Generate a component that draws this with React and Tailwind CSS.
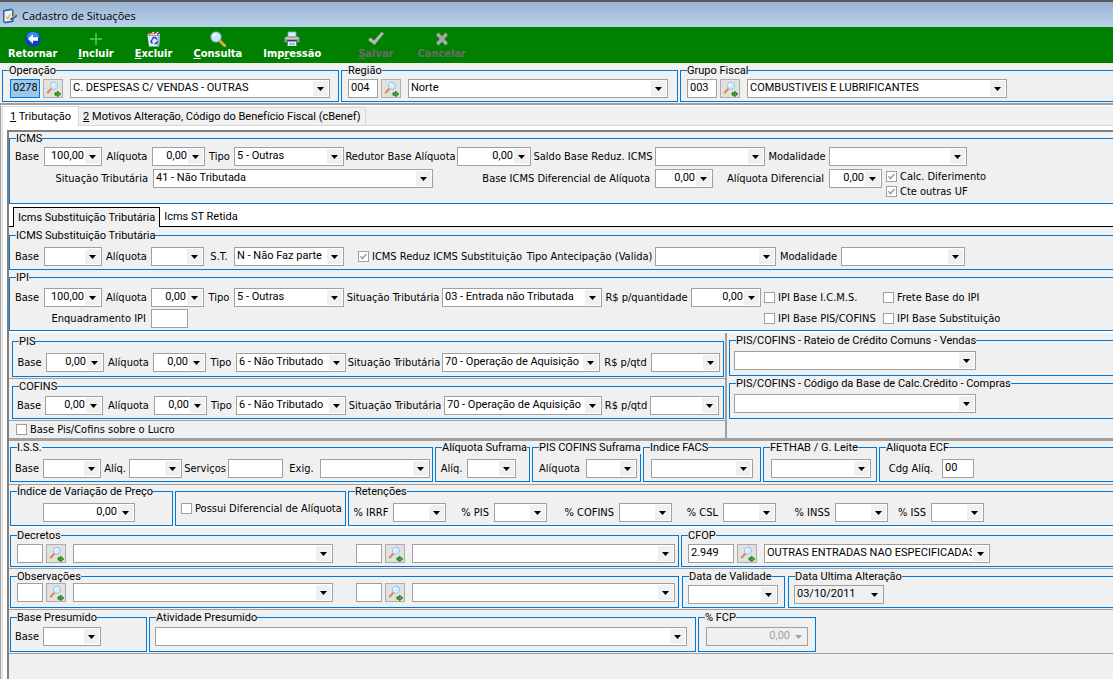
import { useId } from 'react';
import clsx from 'clsx';

const UI_FONT = "font-['DejaVu_Sans_Condensed','DejaVu_Sans',sans-serif]";
const DATA_FONT = "font-['Roboto',Arial,sans-serif]";

/* ---------- Ícones ---------- */

function AppIcon() {
  return (
    <svg width="16" height="16" viewBox="0 0 16 16" aria-hidden="true">
      <path d="M1 2 9.500 .5l2 1.500v12L3 15.500 1 14z" fill="#2f66a8" />
      <path d="M2.500 3.500 10 2.200v10.300L2.500 13.800z" fill="#eef5fc" />
      <path d="M4 8.500 5.800 10.500 8.500 6" fill="none" stroke="#e8b23c" strokeWidth="1.400" />
      <path d="M7.500 11.200 13.500 6l2 2L9.500 12z" fill="#31507a" />
      <path d="M9.500 9.800 14.500 6.200" stroke="#e0a860" strokeWidth="1.200" />
    </svg>
  );
}

function BackIcon() {
  return (
    <svg width="16" height="16" viewBox="0 0 16 16" aria-hidden="true">
      <circle cx="8" cy="8" r="7.800" fill="#0b3fc5" />
      <path d="M1.500 6.500a6.600 6.600 0 0 1 13 0c-3 1.500-10 1.500-13 0z" fill="#3f86ee" />
      <path d="M2.800 8 8 3.200v3.100h5v3.400H8v3.100z" fill="#fff" />
    </svg>
  );
}

function PlusIcon() {
  return (
    <svg width="16" height="16" viewBox="0 0 16 16" aria-hidden="true">
      <path d="M8 2v12M2 8h12" stroke="#4fd038" strokeWidth="1.600" />
    </svg>
  );
}

function TrashIcon() {
  return (
    <svg width="16" height="16" viewBox="0 0 16 16" aria-hidden="true">
      <path d="M1.500 4h12.500l-1 11.500H3z" fill="#e6e9f6" />
      <path d="M14 4l-1 11.500h-2L12 4z" fill="#a9b1d6" />
      <path d="M1 4.500 3 1.500l2 1.500 2-2.500 2.500 2L12 .5l2.500 4z" fill="#f4f4f4" />
      <path d="M2.500 3.500 4.500 1.800M8 3l1.500-2" stroke="#e02020" strokeWidth="1.400" />
      <path d="M5.500 3.500 7 2" stroke="#e8a020" strokeWidth="1.500" />
      <path d="M11 3.500 13 2" stroke="#283a9c" strokeWidth="1.500" />
      <path d="M6 8.500 7.500 6.500h2L11 8.500M11.500 10l-1 2.500h-2M6.500 12.500 5 10.500 6 9" fill="none" stroke="#1747c8" strokeWidth="1.500" />
      <path d="M1.500 4.500h12.500" stroke="#8088b8" strokeWidth=".8" />
    </svg>
  );
}

function SearchIcon() {
  return (
    <svg width="16" height="16" viewBox="0 0 16 16" aria-hidden="true">
      <path d="M10 10l5 5" stroke="#f0a63c" strokeWidth="2.800" strokeLinecap="round" />
      <circle cx="6" cy="6" r="5" fill="#cfe9fb" stroke="#8fb9e0" strokeWidth="1.200" />
      <path d="M3 6a3 3 0 0 1 3-3" fill="none" stroke="#fff" strokeWidth="1.500" />
    </svg>
  );
}

function PrinterIcon() {
  return (
    <svg width="16" height="16" viewBox="0 0 16 16" aria-hidden="true">
      <path d="M4 1h8v5H4z" fill="#dfe9f8" stroke="#8ea6cc" strokeWidth=".8" />
      <path d="M.500 6.500 2 5.500h12l1.500 1v5H.5z" fill="#8a8e98" />
      <path d="M1.500 6.500h13v1.800h-13z" fill="#c9ccd4" />
      <path d="M3.500 9h9v2.500h-9z" fill="#3b3f4a" />
      <path d="M4 10.500h8l.5 4.500h-9z" fill="#f5f8ff" />
      <path d="M5 12.300h6M5 13.800h6" stroke="#5a8fe0" strokeWidth=".8" />
    </svg>
  );
}

function CheckIcon() {
  return (
    <svg width="16" height="16" viewBox="0 0 16 16" aria-hidden="true">
      <path d="M0 9l2.500-2.500L6 9.500 13.500 1 16 2.500 6.500 14z" fill="#b4b4b4" />
    </svg>
  );
}

function CrossIcon() {
  return (
    <svg width="16" height="16" viewBox="0 0 16 16" aria-hidden="true">
      <path d="M2 4l2.500-2.500L8 5.200l3.500-3.700L14 4l-3.600 4 3.600 4-2.500 2.500L8 10.800l-3.500 3.700L2 12l3.600-4z" fill="#a6a6a6" />
    </svg>
  );
}

function LookupIcon() {
  return (
    <svg width="16" height="16" viewBox="0 0 16 16" aria-hidden="true">
      <path d="M6.300 7.700 2.800 11.500" stroke="#e08a3c" strokeWidth="2" strokeLinecap="round" />
      <circle cx="9" cy="4.800" r="3.600" fill="#d3edfc" stroke="#9cc0e4" strokeWidth="1" />
      <path d="M7 4.800a2 2 0 0 1 2-2" fill="none" stroke="#fff" strokeWidth="1.200" />
      <path d="M10 11.800h2.500v-1.600L15.800 13l-3.300 2.800v-1.600H10z" fill="#3fae28" stroke="#146b0c" strokeWidth=".8" />
    </svg>
  );
}

/* ---------- Controles ---------- */

function Combo({ id, label, value = '', align = 'left', disabled, gray, className }) {
  return (
    <span className={clsx('relative block h-[19px]', className)}>
      <select
        id={id}
        aria-label={label}
        disabled={disabled}
        defaultValue={value}
        className={clsx(
          'block h-full w-full appearance-none border border-[#a0a0a0] pl-[2px] pr-[17px] pb-[2px] text-[11px] leading-[15px] opacity-100',
          DATA_FONT,
          align === 'right' && 'text-right',
          disabled ? 'bg-[#f0f0f0] text-[#a0a0a0]' : gray ? 'bg-[#f0f0f0] text-black' : 'bg-white text-black'
        )}
      >
        <option value={value}>{value}</option>
      </select>
      <span className="pointer-events-none absolute inset-y-[2px] right-[2px] flex w-[15px] items-center justify-center bg-[#f0f0f0]">
        <svg width="7" height="4" viewBox="0 0 7 4" aria-hidden="true">
          <path d="M0 0h7L3.500 4z" fill={disabled ? '#a0a0a0' : '#000'} />
        </svg>
      </span>
    </span>
  );
}

function TextBox({ id, label, value = '', className }) {
  return (
    <input
      id={id}
      aria-label={label}
      type="text"
      defaultValue={value}
      className={clsx('block h-[19px] border border-[#a0a0a0] px-[2px] pb-[2px] text-[11px] leading-[15px] text-black', DATA_FONT, className || 'w-full bg-white')}
    />
  );
}

// Rótulo + controle, ocupando duas colunas da grade
function Field({ label, input, end, ...props }) {
  const id = useId();
  return (
    <>
      <label htmlFor={id} className={clsx('flex whitespace-nowrap leading-[19px]', end ? 'justify-end pr-[5px]' : 'justify-center')}>{label}</label>
      {input ? <TextBox id={id} {...props} /> : <Combo id={id} {...props} />}
    </>
  );
}

function Check({ children, checked, disabled, className }) {
  return (
    <label className={clsx('relative flex items-center gap-[3px] whitespace-nowrap leading-[15px]', className)}>
      <span className="relative block size-[11px] shrink-0">
        <input type="checkbox" defaultChecked={checked} disabled={disabled} className="peer block size-[11px] appearance-none border border-[#a0a0a0] bg-white" />
        <svg className="pointer-events-none absolute inset-0 hidden peer-checked:block" width="11" height="11" viewBox="0 0 11 11" aria-hidden="true">
          <path d="M2.500 5.200 4.500 7.500 8.500 3" fill="none" stroke={disabled ? '#a0a0a0' : '#000'} strokeWidth="1.600" />
        </svg>
      </span>
      {children}
    </label>
  );
}

function LookupButton({ label }) {
  return (
    <button type="button" aria-label={label} className="flex h-[19px] w-5 shrink-0 items-center justify-center border border-[#adadad] bg-[#e1e1e1]">
      <LookupIcon />
    </button>
  );
}

function Group({ title, className, body, children }) {
  return (
    <fieldset className={clsx('min-w-0 border border-[#0078d7]', className)}>
      <legend className={clsx('ml-[6px] whitespace-nowrap text-[11px] leading-[13px]', DATA_FONT)}>{title}</legend>
      <div className={body}>{children}</div>
    </fieldset>
  );
}

// Código + botão de pesquisa + descrição
function Lookup({ title, code, text, codeClass, comboClass }) {
  return (
    <div className="flex gap-[3px]">
      <TextBox label={`Código ${title}`} value={code} className={codeClass} />
      <LookupButton label={`Pesquisar ${title}`} />
      <Combo label={title} value={text} className={clsx('ml-1', comboClass)} />
    </div>
  );
}

function ToolButton({ icon, before = '', hot = '', after = '', disabled }) {
  return (
    <button
      type="button"
      disabled={disabled}
      className={clsx('flex flex-col items-center text-[11px] font-bold leading-[14px]', disabled ? 'text-[#6b6b6b]' : 'text-white')}
    >
      {icon}
      <span>{before}<span className="underline">{hot}</span>{after}</span>
    </button>
  );
}

/* ---------- Seções ---------- */

function Header() {
  return (
    <header>
      <div className="flex h-[27px] items-center gap-1 border-t-2 border-[#5a5a5a] bg-linear-to-b from-[#98b4d2] to-[#bbd2eb] pl-[2px] pt-[2px]">
        <AppIcon />
        <h1 className="font-['Open_Sans','Noto_Sans',sans-serif] text-[11px] leading-4 text-black">Cadastro de Situações</h1>
      </div>
      <div className="flex h-9 items-center gap-[21px] bg-[#008000] pl-2 pt-[1px]">
        <ToolButton icon={<BackIcon />} before="Retornar" />
        <ToolButton icon={<PlusIcon />} hot="I" after="ncluir" />
        <ToolButton icon={<TrashIcon />} hot="E" after="xcluir" />
        <ToolButton icon={<SearchIcon />} hot="C" after="onsulta" />
        <ToolButton icon={<PrinterIcon />} before="Imp" hot="r" after="essão" />
        <div className="flex gap-6 pl-4">
          <ToolButton icon={<CheckIcon />} hot="S" after="alvar" disabled />
          <ToolButton icon={<CrossIcon />} before="Cancelar" disabled />
        </div>
      </div>
    </header>
  );
}

function Filters() {
  return (
    <div className="flex gap-[2px] border-b-2 border-[#a0a0a0] pb-px pl-[2px] pt-px">
      <Group title="Operação" className="w-[337px]" body="pb-[3px] pl-[7px] pt-[2px]">
        <Lookup title="Operação" code="0278" text="C. DESPESAS C/ VENDAS - OUTRAS" codeClass="w-[30px] bg-[#99c9ef] outline outline-1 -outline-offset-1 outline-[#0078d7]" comboClass="w-[260px]" />
      </Group>
      <Group title="Região" className="w-[337px]" body="pb-[3px] pl-[6px] pt-[2px]">
        <Lookup title="Região" code="004" text="Norte" codeClass="w-[30px] bg-white" comboClass="w-[260px]" />
      </Group>
      <Group title="Grupo Fiscal" className="flex-1 border-r-0" body="pb-[3px] pl-[6px] pt-[2px]">
        <Lookup title="Grupo Fiscal" code="003" text="COMBUSTIVEIS E LUBRIFICANTES" codeClass="w-[30px] bg-white" comboClass="w-[260px]" />
      </Group>
    </div>
  );
}

function Icms() {
  return (
    <Group title="ICMS" className="border-r-0" body="pb-1 pt-[2px]">
      <div className="grid grid-cols-[34px_58px_50px_53px_29px_110px_113px_74px_124px_110px_64px_138px] pb-[3px]">
        <Field label="Base" value="100,00" align="right" />
        <Field label="Alíquota" value="0,00" align="right" />
        <Field label="Tipo" value="5 - Outras" />
        <Field label="Redutor Base Alíquota" value="0,00" align="right" />
        <Field label="Saldo Base Reduz. ICMS" />
        <Field label="Modalidade" />
      </div>
      <div className="grid grid-cols-[143px_280px_222px_58px_116px_53px_auto]">
        <Field end label="Situação Tributária" value="41 - Não Tributada" />
        <Field end label="Base ICMS Diferencial de Alíquota" value="0,00" align="right" />
        <Field end label="Alíquota Diferencial" value="0,00" align="right" />
        <div className="pl-1">
          <Check checked disabled>Calc. Diferimento</Check>
          <Check checked disabled>Cte outras UF</Check>
        </div>
      </div>
    </Group>
  );
}

function IcmsTabs() {
  return (
    <div role="tablist" className={clsx('flex h-[23px] items-end border-b border-black bg-white pl-[4px] text-[11px] leading-[18px]', DATA_FONT)}>
      <button type="button" role="tab" aria-selected="true" className="-mb-px h-5 border border-b-0 border-black bg-[#f0f0f0] px-1">
        Icms Substituição Tributária
      </button>
      <button type="button" role="tab" aria-selected="false" className="px-1">Icms ST Retida</button>
    </div>
  );
}

function IcmsSt() {
  return (
    <Group title="ICMS Substituição Tributária" className="mt-[2px] border-r-0" body="pb-[3px] pt-[5px]">
      <div className="grid grid-cols-[34px_58px_49px_53px_30px_110px_180px_131px_121px_65px_124px]">
        <Field label="Base" />
        <Field label="Alíquota" />
        <Field label="S.T." value="N - Não Faz parte" />
        <Check checked disabled className="pl-[14px]">ICMS Reduz ICMS Substituição</Check>
        <Field label="Tipo Antecipação (Valida)" />
        <Field label="Modalidade" />
      </div>
    </Group>
  );
}

function Ipi() {
  return (
    <Group title="IPI" className="mt-px border-r-0" body="pb-[2px] pt-1">
      <div className="grid grid-cols-[34px_58px_49px_53px_30px_110px_98px_160px_89px_70px_122px_auto] pb-[2px]">
        <Field label="Base" value="100,00" align="right" />
        <Field label="Alíquota" value="0,00" align="right" />
        <Field label="Tipo" value="5 - Outras" />
        <Field label="Situação Tributária" value="03 - Entrada não Tributada" />
        <Field label="R$ p/quantidade" value="0,00" align="right" />
        <Check className="pl-[3px]">IPI Base I.C.M.S.</Check>
        <Check>Frete Base do IPI</Check>
      </div>
      <div className="grid grid-cols-[141px_37px_573px_122px_auto]">
        <Field end label="Enquadramento IPI" input />
        <Check className="col-start-4 pl-[3px]">IPI Base PIS/COFINS</Check>
        <Check>IPI Base Substituição</Check>
      </div>
    </Group>
  );
}

function PisCofins() {
  return (
    <section className="flex border-b-[3px] border-t-2 border-b-[#a0a0a0] border-t-white">
      <div className="border-r-2 border-[#a0a0a0]">
        <div className="border-b border-[#a0a0a0] pb-px pl-[3px] pr-px pt-[2px]">
          <Group title="PIS" body="pb-1 pr-[3px] pt-[5px]">
            <div className="grid grid-cols-[33px_58px_49px_53px_30px_110px_96px_158px_51px_69px]">
              <Field label="Base" value="0,00" align="right" />
              <Field label="Alíquota" value="0,00" align="right" />
              <Field label="Tipo" value="6 - Não Tributado" />
              <Field label="Situação Tributária" value="70 - Operação de Aquisição" />
              <Field label="R$ p/qtd" />
            </div>
          </Group>
        </div>
        <div className="border-b border-[#a0a0a0] pb-px pl-[3px] pr-px pt-px">
          <Group title="COFINS" body="pb-[3px] pr-1 pt-[3px]">
            <div className="grid grid-cols-[32px_58px_51px_53px_29px_110px_98px_158px_48px_69px]">
              <Field label="Base" value="0,00" align="right" />
              <Field label="Alíquota" value="0,00" align="right" />
              <Field label="Tipo" value="6 - Não Tributado" />
              <Field label="Situação Tributária" value="70 - Operação de Aquisição" />
              <Field label="R$ p/qtd" />
            </div>
          </Group>
        </div>
        <Check className="pb-px pl-[7px] pt-px">Base Pis/Cofins sobre o Lucro</Check>
      </div>
      <div className="flex flex-1 flex-col gap-px pl-[2px] pt-px">
        <Group title="PIS/COFINS - Rateio de Crédito Comuns - Vendas" className="border-r-0" body="pb-[5px] pl-1 pt-1">
          <Combo label="Rateio de Crédito Comuns - Vendas" className="w-[242px]" />
        </Group>
        <Group title="PIS/COFINS - Código da Base de Calc.Crédito - Compras" className="border-r-0" body="pb-[5px] pl-1 pt-1">
          <Combo label="Código da Base de Calc.Crédito - Compras" className="w-[242px]" />
        </Group>
      </div>
    </section>
  );
}

function Iss() {
  return (
    <section className="flex gap-[2px] border-b border-[#a0a0a0] pb-[2px] pl-px">
      <Group title="I.S.S." className="w-[423px]" body="pb-[3px] pt-[5px]">
        <div className="grid grid-cols-[32px_58px_28px_53px_46px_55px_37px_110px]">
          <Field label="Base" />
          <Field label="Alíq." />
          <Field label="Serviços" input />
          <Field label="Exig." />
        </div>
      </Group>
      <Group title="Alíquota Suframa" className="w-[95px]" body="pb-[3px] pt-[5px]">
        <div className="grid grid-cols-[31px_49px]">
          <Field label="Alíq." />
        </div>
      </Group>
      <Group title="PIS COFINS Suframa" className="w-[109px]" body="pb-[3px] pt-[5px]">
        <div className="grid grid-cols-[53px_51px]">
          <Field label="Alíquota" />
        </div>
      </Group>
      <Group title="Indice FACS" className="w-[118px]" body="pb-[3px] pl-[7px] pt-[5px]">
        <Combo label="Indice FACS" className="w-[102px]" />
      </Group>
      <Group title="FETHAB / G. Leite" className="w-[114px]" body="pb-[3px] pl-[7px] pt-[5px]">
        <Combo label="FETHAB / G. Leite" className="w-[100px]" />
      </Group>
      <Group title="Alíquota ECF" className="flex-1 border-r-0" body="pb-[3px] pt-[5px]">
        <div className="grid grid-cols-[62px_32px]">
          <Field label="Cdg Alíq." value="00" input />
        </div>
      </Group>
    </section>
  );
}

function Retencoes() {
  return (
    <section className="flex gap-[2px] border-b-2 border-white pl-px">
      <Group title="Índice de Variação de Preço" className="w-[163px]" body="pb-[3px] pl-8 pt-[5px]">
        <Combo label="Índice de Variação de Preço" value="0,00" align="right" className="w-[92px]" />
      </Group>
      <div className="mt-[6px] flex w-[171px] items-center border border-[#0078d7] pl-[5px]">
        <Check>Possui Diferencial de Alíquota</Check>
      </div>
      <Group title="Retenções" className="flex-1 border-r-0" body="pb-[3px] pt-[5px]">
        <div className="grid grid-cols-[44px_53px_48px_53px_72px_53px_51px_53px_59px_53px_43px_53px]">
          <Field label="% IRRF" />
          <Field end label="% PIS" />
          <Field end label="% COFINS" />
          <Field end label="% CSL" />
          <Field end label="% INSS" />
          <Field end label="% ISS" />
        </div>
      </Group>
    </section>
  );
}

function Decretos() {
  return (
    <section className="flex gap-[2px] border-b border-[#a0a0a0] pb-px pl-px pt-px">
      <Group title="Decretos" className="w-[669px]" body="flex gap-[23px] pb-[3px] pl-[6px] pt-[2px]">
        <Lookup title="Decreto 1" codeClass="w-[26px] bg-white" comboClass="w-[260px]" />
        <Lookup title="Decreto 2" codeClass="w-[26px] bg-white" comboClass="w-[263px]" />
      </Group>
      <Group title="CFOP" className="flex-1 border-r-0" body="pb-[3px] pl-[6px] pt-[2px]">
        <Lookup title="CFOP" code="2.949" text="OUTRAS ENTRADAS NAO ESPECIFICADAS" codeClass="w-[46px] bg-white" comboClass="w-[226px]" />
      </Group>
    </section>
  );
}

function Observacoes() {
  return (
    <section className="flex gap-[3px] border-b border-[#a0a0a0] pb-px pl-px pt-px">
      <Group title="Observações" className="w-[669px]" body="flex gap-[23px] pb-[5px] pl-[6px]">
        <Lookup title="Observação 1" codeClass="w-[26px] bg-white" comboClass="w-[260px]" />
        <Lookup title="Observação 2" codeClass="w-[26px] bg-white" comboClass="w-[263px]" />
      </Group>
      <Group title="Data de Validade" className="w-[103px]" body="pb-[3px] pl-[5px] pt-[2px]">
        <Combo label="Data de Validade" className="w-[90px]" />
      </Group>
      <Group title="Data Ultima Alteração" className="flex-1 border-r-0" body="pb-[3px] pl-[5px] pt-[2px]">
        <Combo label="Data Ultima Alteração" value="03/10/2011" gray className="w-[90px]" />
      </Group>
    </section>
  );
}

function Presumido() {
  return (
    <section className="flex gap-[2px] border-b border-[#a0a0a0] pb-px pl-px pt-px">
      <Group title="Base Presumido" className="w-[137px]" body="pb-[5px] pt-[3px]">
        <div className="grid grid-cols-[32px_58px]">
          <Field label="Base" />
        </div>
      </Group>
      <Group title="Atividade Presumido" className="w-[547px]" body="pb-[5px] pl-[5px] pt-[3px]">
        <Combo label="Atividade Presumido" className="w-[532px]" />
      </Group>
      <Group title="% FCP" className="w-[118px]" body="pb-[5px] pl-[7px] pt-[3px]">
        <Combo label="% FCP" value="0,00" align="right" disabled className="w-[102px]" />
      </Group>
    </section>
  );
}

export default function App() {
  return (
    <div className={clsx('flex min-h-screen flex-col overflow-x-hidden bg-[#f0f0f0] text-[11px] text-black', UI_FONT)}>
      <Header />
      <Filters />
      <main className="flex flex-1 flex-col border-l border-t border-l-[#a0a0a0] border-t-white pl-px">
        <div role="tablist" className={clsx('flex h-5 items-end border-b border-[#d9d9d9] text-[11px] leading-4', DATA_FONT)}>
          <button type="button" role="tab" aria-selected="true" className="-mb-px h-5 border border-b-0 border-[#d9d9d9] bg-white px-[7px]">
            <span className="underline">1</span> Tributação
          </button>
          <button type="button" role="tab" aria-selected="false" className="h-[18px] border border-b-0 border-l-0 border-[#d9d9d9] px-1">
            <span className="underline">2</span> Motivos Alteração, Código do Benefício Fiscal (cBenef)
          </button>
        </div>
        <div className="flex flex-1 flex-col border-l border-[#d9d9d9] bg-white pl-1 pt-1">
          <div className="flex-1 border-l-2 border-t-2 border-l-[#808080] border-t-[#808080] bg-[#f0f0f0]">
            <Icms />
            <IcmsTabs />
            <IcmsSt />
            <Ipi />
            <PisCofins />
            <Iss />
            <Retencoes />
            <Decretos />
            <Observacoes />
            <Presumido />
          </div>
        </div>
      </main>
    </div>
  );
}
